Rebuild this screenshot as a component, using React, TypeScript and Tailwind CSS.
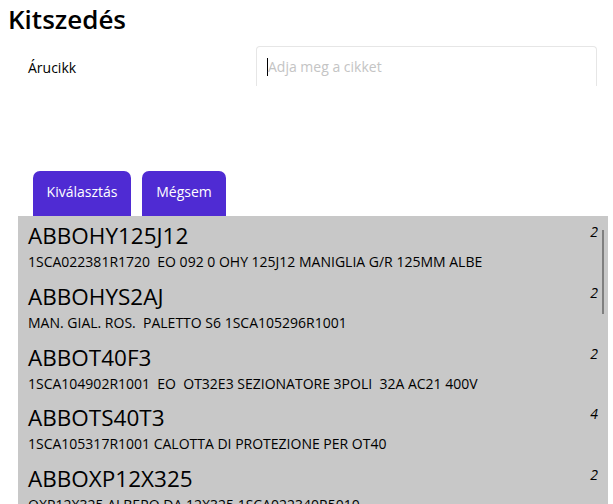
import React from 'react'

const items = [
  { code: 'ABBOHY125J12', desc: '1SCA022381R1720  EO 092 0 OHY 125J12 MANIGLIA G/R 125MM ALBE', qty: 2 },
  { code: 'ABBOHYS2AJ', desc: 'MAN. GIAL. ROS.  PALETTO S6 1SCA105296R1001', qty: 2 },
  { code: 'ABBOT40F3', desc: '1SCA104902R1001  EO  OT32E3 SEZIONATORE 3POLI  32A AC21 400V', qty: 2 },
  { code: 'ABBOTS40T3', desc: '1SCA105317R1001 CALOTTA DI PROTEZIONE PER OT40', qty: 4 },
  { code: 'ABBOXP12X325', desc: 'OXP12X325 ALBERO DA 12X325 1SCA022340R5010', qty: 2 },
]

export default function App() {
  return (
    <div className="h-[504px] w-[613px] overflow-hidden bg-white font-['Open_Sans',sans-serif] text-black">
      <h1 className="px-2 pt-[2px] text-[26px] font-semibold leading-[34px]">Kitszedés</h1>

      <div className="mt-[10px] flex h-[40px]">
        <label className="w-[256px] shrink-0 pl-7 pt-[12px] text-sm">Árucikk</label>
        <div className="flex h-[40px] w-[341px] items-center rounded-t-[4px] border border-b-0 border-[#e6e6e6] pl-[10px]">
          <span className="h-[18px] w-px bg-black" />
          <span className="text-sm text-[#c4c4c4]">Adja meg a cikket</span>
        </div>
      </div>

      <div className="mt-[85px] flex gap-[11px] pl-[33px]">
        <button className="h-[45px] w-[98px] rounded-t-[7px] bg-[#4f2bd3] text-sm text-white">
          <span className="relative -top-[2px]">Kiválasztás</span>
        </button>
        <button className="h-[45px] w-[84px] rounded-t-[7px] bg-[#4f2bd3] text-sm text-white">
          <span className="relative -top-[2px]">Mégsem</span>
        </button>
      </div>

      <div className="relative ml-[18px] h-[300px] w-[590px] bg-[#c8c8c8]">
        <div className="absolute right-[4px] top-[14px] h-[84px] w-[2px] bg-[#7f7f7f]" />
        {items.map((it) => (
          <div key={it.code} className="relative h-[60.8px] pl-[10px] pt-[4px]">
            <div className="text-[22.5px] leading-[32px]">{it.code}</div>
            <div className="whitespace-pre text-[14px] leading-[19px]">{it.desc}</div>
            <span className="absolute right-[10px] top-[5px] text-[14px] italic">{it.qty}</span>
          </div>
        ))}
      </div>
    </div>
  )
}
